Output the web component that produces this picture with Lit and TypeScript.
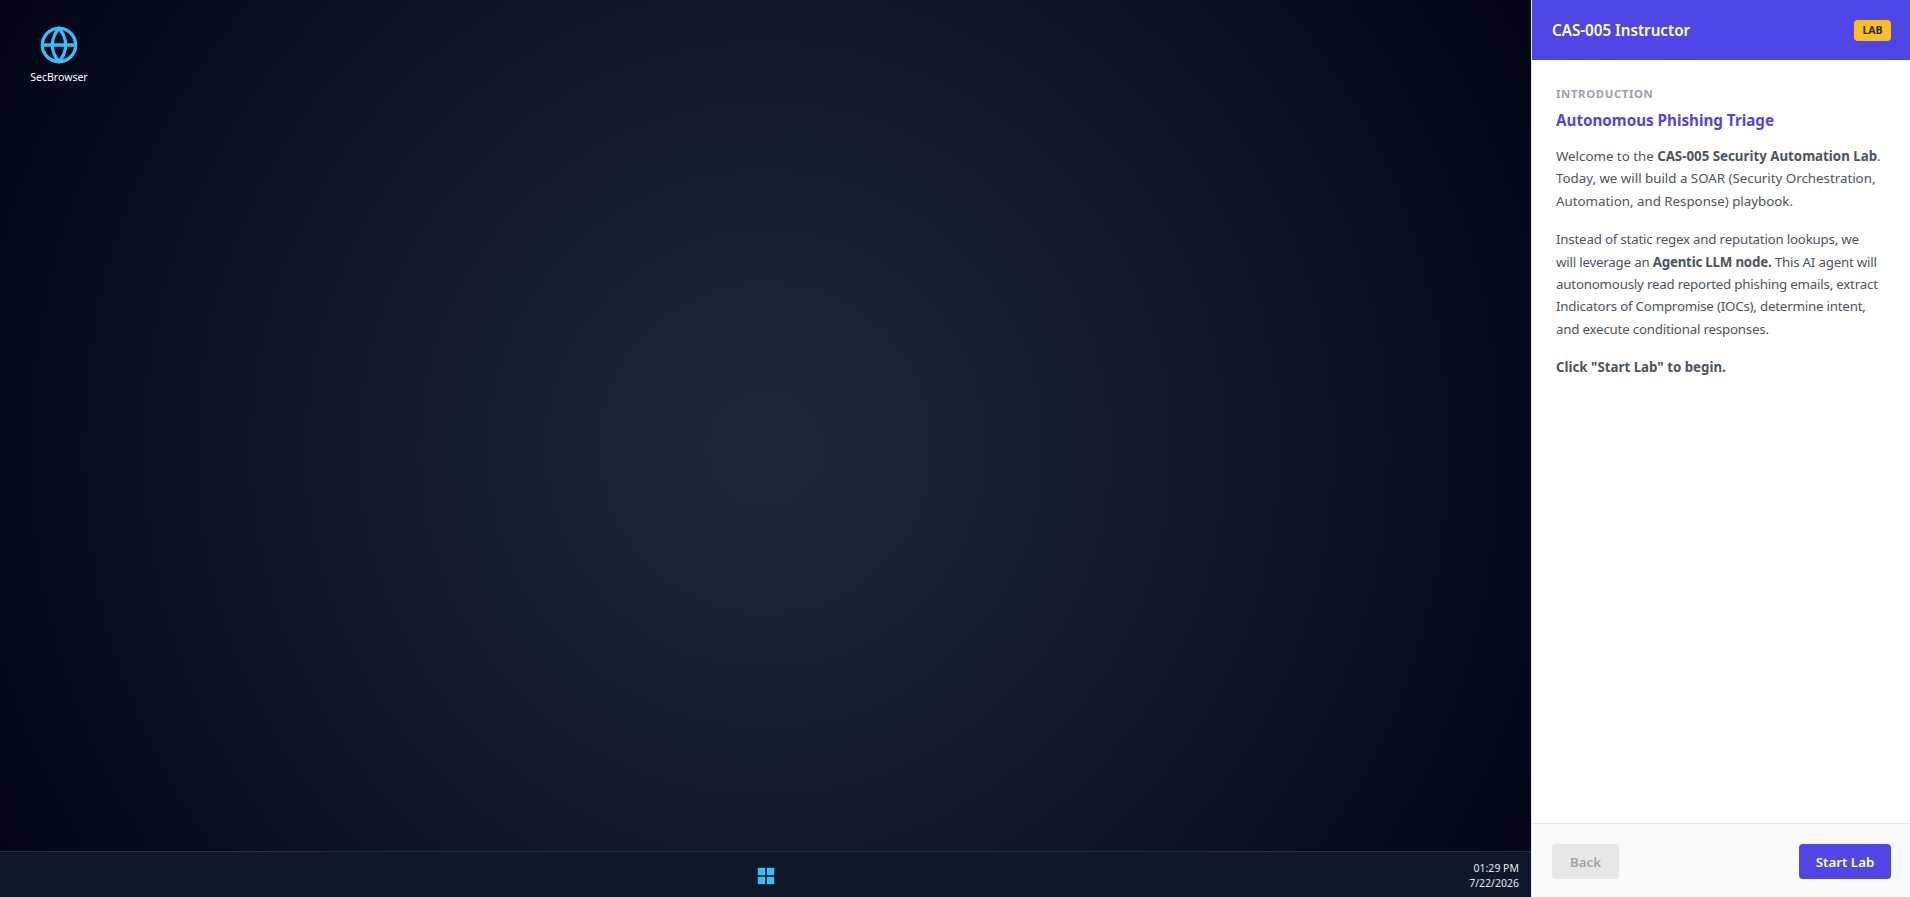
import { LitElement, html, css } from "lit";
import { customElement } from "lit/decorators.js";

@customElement("app-root")
export class AppRoot extends LitElement {
  static styles = css`
    :host { display: flex; width: 100%; height: 897px; overflow: hidden; font-family: "Noto Sans", sans-serif; }
    .desktop { flex: 1; min-width: 0; display: flex; flex-direction: column; background: radial-gradient(circle at center, #1e293b 0%, #020617 100%); }
    .icons { flex: 1; padding: 25px 0 0 24px; }
    .icon { width: 70px; display: flex; flex-direction: column; align-items: center; gap: 5px; color: #fff; font-size: 10.5px; line-height: 14px; }
    .icon svg { width: 40px; height: 40px; display: block; }
    .taskbar { height: 45px; border-top: 1px solid rgba(255,255,255,.1); background: #0f172a; display: flex; align-items: center; justify-content: center; position: relative; }
    .win { display: grid; grid-template-columns: 7px 7px; grid-auto-rows: 7px; gap: 2px; margin-top: 2px; }
    .win i { background: #38bdf8; box-shadow: 0 0 0 .5px rgba(56,189,248,.35); }
    .clock { position: absolute; right: 12px; top: 2px; bottom: 0; display: flex; flex-direction: column; justify-content: center; align-items: flex-end; color: #e2e8f0; font-size: 10.5px; line-height: 15px; }
    .panel { width: 378px; flex: none; border-left: 1px solid #e5e7eb; background: #fff; display: flex; flex-direction: column; }
    .head { height: 60px; background: #4f46e5; color: #fff; display: flex; align-items: center; justify-content: space-between; padding: 0 19px 0 20px; font-size: 15.2px; font-weight: 600; }
    .badge { background: #fbbf24; color: #1f2937; font-size: 10.5px; font-weight: 700; border-radius: 4px; padding: 2px 8px; line-height: 17px; width: 21px; text-align: center; }
    .body { flex: 1; padding: 25px 22px 0 24px; color: #4b5563; font-size: 13.3px; line-height: 22.4px; }
    .kicker { color: #9ca3af; font-size: 11.4px; font-weight: 700; line-height: 18px; letter-spacing: .6px; }
    h2 { margin: 5px 0 13px; color: #4f46e5; font-size: 15.2px; font-weight: 700; line-height: 24px; }
    p { margin: 0 0 16px; }
    .tight { letter-spacing: -.2px; }
    b { font-weight: 700; color: #4b5563; }
    .foot { height: 74px; box-sizing: border-box; border-top: 1px solid #e5e7eb; background: #f9fafb; display: flex; align-items: center; justify-content: space-between; padding: 2px 19px 0 20px; }
    button { height: 35px; border: 0; border-radius: 4px; font: 600 13.3px "Noto Sans", sans-serif; padding: 0; }
    .back { width: 67px; background: #e5e7eb; color: #9ca3af; }
    .start { width: 92px; background: #4f46e5; color: #fff; }
  `;
  render() {
    return html`
      <div class="desktop">
        <div class="icons">
          <div class="icon">
            <svg viewBox="0 0 24 24" fill="none" stroke="#38bdf8" stroke-width="2"><circle cx="12" cy="12" r="10"/><path d="M2 12h20"/><path d="M12 2a15.3 15.3 0 0 1 4 10 15.3 15.3 0 0 1-4 10 15.3 15.3 0 0 1-4-10 15.3 15.3 0 0 1 4-10z"/></svg>
            <span>SecBrowser</span>
          </div>
        </div>
        <div class="taskbar">
          <div class="win"><i></i><i></i><i></i><i></i></div>
          <div class="clock"><span>01:29 PM</span><span>7/22/2026</span></div>
        </div>
      </div>
      <aside class="panel">
        <div class="head"><span>CAS-005 Instructor</span><span class="badge">LAB</span></div>
        <div class="body">
          <div class="kicker">INTRODUCTION</div>
          <h2>Autonomous Phishing Triage</h2>
          <p>Welcome to the <b>CAS-005 Security Automation Lab</b>.<br>Today, we will build a SOAR (Security Orchestration,<br>Automation, and Response) playbook.</p>
          <p class="tight">Instead of static regex and reputation lookups, we<br>will leverage an <b>Agentic LLM node.</b> This AI agent will<br>autonomously read reported phishing emails, extract<br>Indicators of Compromise (IOCs), determine intent,<br>and execute conditional responses.</p>
          <p><b>Click "Start Lab" to begin.</b></p>
        </div>
        <div class="foot"><button class="back">Back</button><button class="start">Start Lab</button></div>
      </aside>
    `;
  }
}
